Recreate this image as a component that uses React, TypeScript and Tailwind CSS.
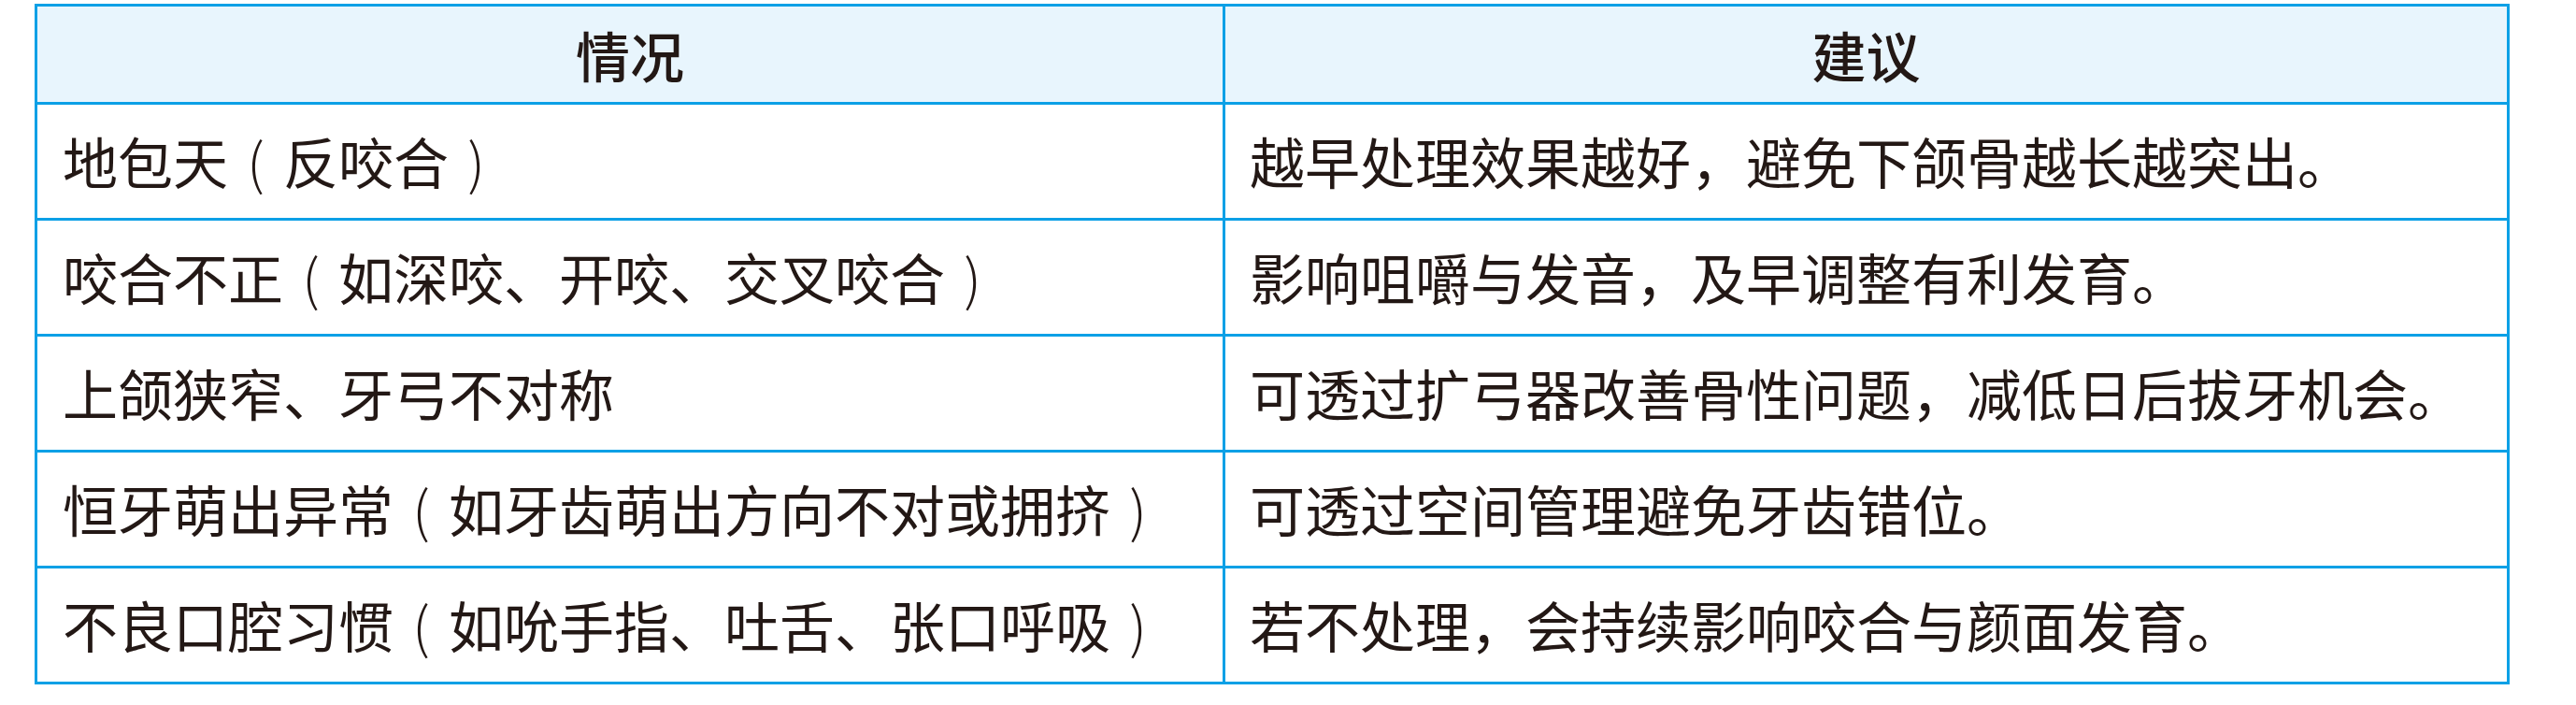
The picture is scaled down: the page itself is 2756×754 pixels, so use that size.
const rows = [
  ['地包天（反咬合）', '越早处理效果越好，避免下颌骨越长越突出。'],
  ['咬合不正（如深咬、开咬、交叉咬合）', '影响咀嚼与发音，及早调整有利发育。'],
  ['上颌狭窄、牙弓不对称', '可透过扩弓器改善骨性问题，减低日后拔牙机会。'],
  ['恒牙萌出异常（如牙齿萌出方向不对或拥挤）', '可透过空间管理避免牙齿错位。'],
  ['不良口腔习惯（如吮手指、吐舌、张口呼吸）', '若不处理，会持续影响咬合与颜面发育。'],
]

// fullwidth parens in the print font sit centred in their cell
function Text({ s }: { s: string }) {
  const parts = s.split(/([（）])/)
  return (
    <>
      {parts.map((p, i) =>
        p === '（' || p === '）' ? (
          <span key={i} className="inline-block w-[1em] text-center font-extralight">
            {p === '（' ? '(' : ')'}
          </span>
        ) : (
          <span key={i}>{p}</span>
        )
      )}
    </>
  )
}

export default function App() {
  const head =
    "h-[102px] bg-[#e8f5fd] flex items-center justify-center text-[58px] text-[#231815] font-['Noto_Sans_CJK_SC',sans-serif] font-medium"
  const cell =
    "h-[121px] bg-white flex items-center whitespace-nowrap text-[59px] text-[#231815] font-['Noto_Sans_CJK_SC',sans-serif] font-normal"

  return (
    <div className="w-[2756px] h-[754px] bg-white pt-[4px] pl-[37px]">
      <div className="w-[2648px] grid grid-cols-[1268px_1371px] gap-[3px] p-[3px] bg-[#0ca0e6]">
        <div className={head}>情况</div>
        <div className={head}>建议</div>

        {rows.map((r, i) => [
          <div key={'a' + i} className={cell + ' pl-[27px]'}>
            <Text s={r[0]} />
          </div>,
          <div key={'b' + i} className={cell + ' pl-[26px]'}>
            <Text s={r[1]} />
          </div>,
        ])}
      </div>
    </div>
  )
}
